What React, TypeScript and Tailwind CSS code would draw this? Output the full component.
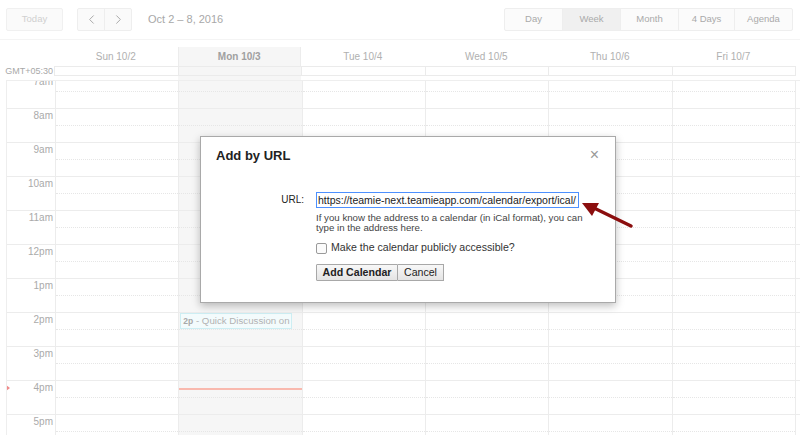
import React from 'react';
import { ChevronLeft, ChevronRight } from 'lucide-react';

const days = ['Sun 10/2', 'Mon 10/3', 'Tue 10/4', 'Wed 10/5', 'Thu 10/6', 'Fri 10/7'];
const hours = ['7am', '8am', '9am', '10am', '11am', '12pm', '1pm', '2pm', '3pm', '4pm', '5pm'];
const views = ['Day', 'Week', 'Month', '4 Days', 'Agenda'];

const cols = 'grid grid-cols-[48px_repeat(6,1fr)_5px]';

const Toolbar: React.FC = () => (
  <div className="h-[40px] flex items-center pl-[6px] pr-[7px] border-b border-[#f4f4f4]">
    <div className="w-[57px] h-[23px] flex items-center justify-center text-[9.5px] text-[#d0d0d0] bg-[#fafafa] border border-[#f0f0f0] rounded-[2px]">
      Today
    </div>
    <div className="ml-[14px] flex h-[23px] border border-[#eeeeee] rounded-[2px] bg-[#fafafa]">
      <div className="w-[26px] flex items-center justify-center text-[#aaaaaa]">
        <ChevronLeft size={15} strokeWidth={1.6} />
      </div>
      <div className="w-[27px] flex items-center justify-center text-[#aaaaaa] border-l border-[#eeeeee]">
        <ChevronRight size={15} strokeWidth={1.6} />
      </div>
    </div>
    <div className="ml-[16px] text-[11px] text-[#a8a8a8]">Oct 2 – 8, 2016</div>
    <div className="ml-auto flex h-[23px] border border-[#eeeeee] rounded-[2px] bg-[#fbfbfb]">
      {views.map((v, i) => (
        <div
          key={v}
          className={
            'flex items-center justify-center text-[9.5px] text-[#aaaaaa] ' +
            (i > 0 ? 'border-l border-[#eeeeee] ' : '') +
            (v === 'Week' ? 'bg-[#f0f0f0] w-[58px]' : v === 'Day' ? 'w-[57px]' : v === '4 Days' ? 'w-[56px]' : 'w-[58px]')
          }
        >
          {v}
        </div>
      ))}
    </div>
  </div>
);

const Header: React.FC = () => (
  <>
    <div className="h-[7px]" />
    <div className="grid grid-cols-[54px_repeat(6,1fr)_5px] h-[19px]">
      <div />
      {days.map((d, i) => (
        <div
          key={d}
          className={
            'flex items-center justify-center text-[10px] ' +
            (i === 1 ? 'bg-[#f6f6f6] border-x border-[#ececec] font-bold text-[#a0a0a0]' : 'text-[#b0b0b0]')
          }
        >
          {d}
        </div>
      ))}
      <div />
    </div>
    <div className="grid grid-cols-[54px_repeat(6,1fr)_5px] h-[10px]">
      <div className="flex items-center justify-end pr-[1px] text-[9px] leading-none text-[#a8a8a8]">GMT+05:30</div>
      {days.map((d, i) => (
        <div
          key={d}
          className={'border-y border-l border-[#ebebeb] ' + (i === 1 ? 'bg-[#f6f6f6]' : '')}
        />
      ))}
      <div className="border-l border-[#ebebeb]" />
    </div>
    <div className="h-[4px] grid grid-cols-[54px_repeat(6,1fr)_5px]">
      <div />
      <div />
      <div className="bg-[#f6f6f6]" />
    </div>
  </>
);

const Body: React.FC = () => (
  <div className="ml-[6px] flex-1 overflow-hidden border-t border-l border-[#eeeeee] relative">
    <div className="-mt-[7px]">
      {hours.map((h) => (
        <div key={h} className={cols + ' h-[34px] border-t border-[#ececec]'}>
          <div className="relative text-right pr-[2px] text-[10px] leading-[10px] text-[#aaaaaa] pt-[2px]">
            {h}
          </div>
          {days.map((d, i) => (
            <div
              key={d}
              className={'relative border-l border-[#ececec] ' + (i === 1 ? 'bg-[#f6f6f6]' : '')}
            >
              <div className="mt-[16px] border-t border-dotted border-[#e6e6e6]" />
              {i === 1 && h === '2pm' && (
                <div className="absolute left-[1px] top-0 w-[112px] h-[16px] bg-[#f3fbfc] border border-[#cdeef3] text-[9.7px] leading-[14px] text-[#b2b2b2] pl-[2px] whitespace-nowrap overflow-hidden">
                  <span className="font-bold text-[8.5px] text-[#a8a8a8]">2p</span> - Quick Discussion on
                </div>
              )}
              {i === 1 && h === '4pm' && (
                <div className="absolute left-0 right-0 top-[7px] h-[2px] bg-[#f9b9ae]" />
              )}
            </div>
          ))}
          <div className="border-l border-[#ececec]" />
        </div>
      ))}
    </div>
    <span className="absolute left-[-1px] top-[304px] w-0 h-0 border-y-[3px] border-y-transparent border-l-[4px] border-l-[#f08a8a]" />
  </div>
);

const Dialog: React.FC = () => (
  <div className="absolute left-[200px] top-[136px] w-[416px] h-[167px] bg-white border border-[#a9a9a9] shadow-[0_3px_8px_rgba(0,0,0,0.25)] text-[#222]">
    <div className="flex items-start justify-between pl-[15px] pr-[16px] pt-[11px]">
      <div className="text-[13px] font-bold leading-[16px]">Add by URL</div>
      <div className="text-[16px] leading-[14px] text-[#999999]">×</div>
    </div>
    <div className="mt-[28px] flex">
      <div className="w-[103px] text-right text-[10px] leading-[16px] text-[#222]">URL:</div>
      <div className="ml-[12px] flex flex-col">
        <div className="w-[263px] h-[16px] border border-[#4d90fe] px-[1px] text-[10.5px] leading-[14px] text-[#222] whitespace-nowrap overflow-hidden">
          https://teamie-next.teamieapp.com/calendar/export/ical/
        </div>
        <div className="mt-[5px] w-[275px] text-[9.7px] leading-[10px] text-[#444]">
          If you know the address to a calendar (in iCal format), you can type in the address here.
        </div>
        <label className="mt-[9px] h-[12px] flex items-center text-[10.6px] text-[#333]">
          <span className="w-[11px] h-[11px] border border-[#9a9a9a] rounded-[2px] bg-[#fbfbfb]" />
          <span className="ml-[4px]">Make the calendar publicly accessible?</span>
        </label>
        <div className="mt-[10px] flex">
          <div className="w-[82px] h-[17px] flex items-center justify-center text-[10.6px] font-bold text-[#222] bg-gradient-to-b from-[#f8f8f8] to-[#e4e4e4] border border-[#a8a8a8] rounded-l-[1px]">
            Add Calendar
          </div>
          <div className="w-[46px] h-[17px] flex items-center justify-center text-[10.6px] text-[#222] bg-gradient-to-b from-[#f8f8f8] to-[#e4e4e4] border border-l-0 border-[#a8a8a8]">
            Cancel
          </div>
        </div>
      </div>
    </div>
  </div>
);

const Arrow: React.FC = () => (
  <svg className="absolute left-0 top-0 pointer-events-none" width="800" height="435">
    <line x1="631" y1="226" x2="594" y2="208" stroke="#8b0e0e" strokeWidth="3.5" strokeLinecap="round" />
    <polygon points="582,203 599,203 592,216" fill="#8b0e0e" />
  </svg>
);

export default function App() {
  return (
    <div className="relative w-[800px] h-[435px] overflow-hidden bg-white font-['Liberation_Sans',Arial,sans-serif] flex flex-col">
      <Toolbar />
      <Header />
      <Body />
      <Dialog />
      <Arrow />
    </div>
  );
}
